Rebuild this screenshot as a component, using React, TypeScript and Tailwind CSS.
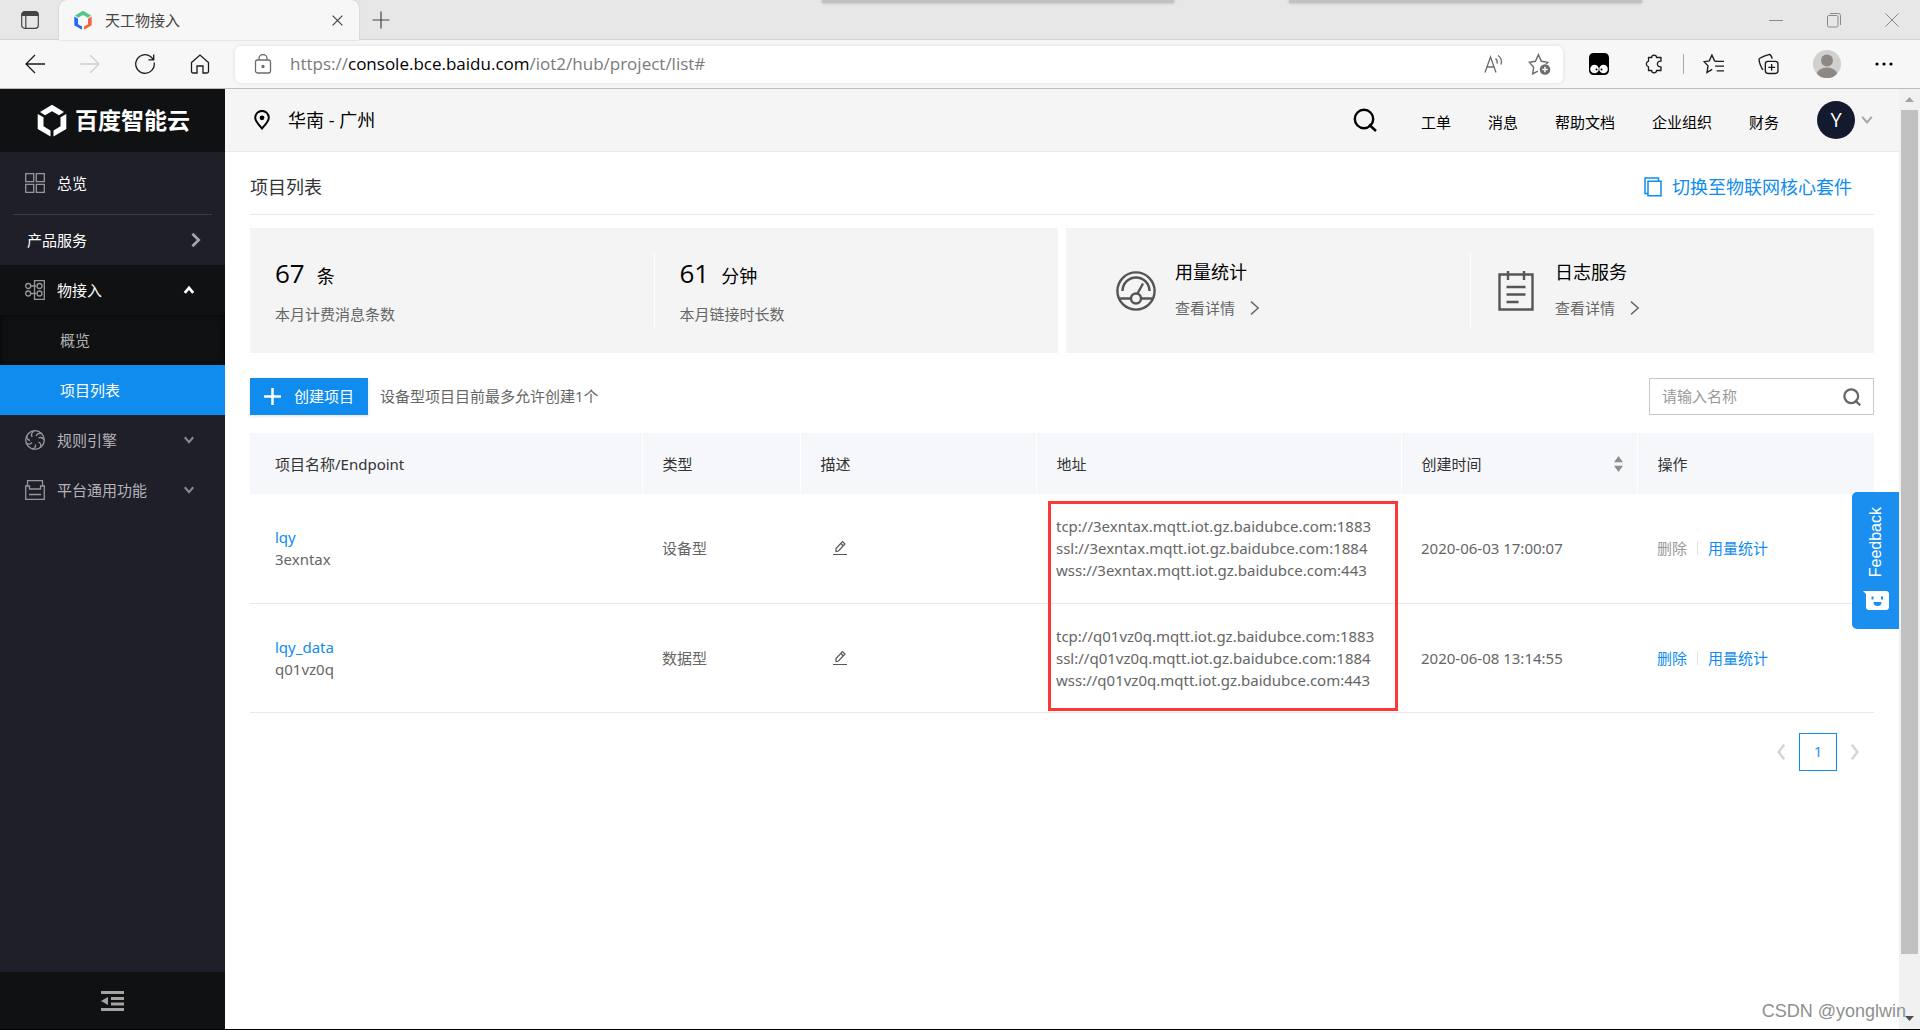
import type { ReactNode } from "react";

interface IconProps {
  className?: string;
  children?: ReactNode;
}

interface Project {
  name: string;
  endpoint: string;
  type: string;
  addresses: string[];
  createdAt: string;
  removable: boolean;
}

const projects: Project[] = [
  {
    name: "lqy",
    endpoint: "3exntax",
    type: "设备型",
    addresses: [
      "tcp://3exntax.mqtt.iot.gz.baidubce.com:1883",
      "ssl://3exntax.mqtt.iot.gz.baidubce.com:1884",
      "wss://3exntax.mqtt.iot.gz.baidubce.com:443",
    ],
    createdAt: "2020-06-03 17:00:07",
    removable: false,
  },
  {
    name: "lqy_data",
    endpoint: "q01vz0q",
    type: "数据型",
    addresses: [
      "tcp://q01vz0q.mqtt.iot.gz.baidubce.com:1883",
      "ssl://q01vz0q.mqtt.iot.gz.baidubce.com:1884",
      "wss://q01vz0q.mqtt.iot.gz.baidubce.com:443",
    ],
    createdAt: "2020-06-08 13:14:55",
    removable: true,
  },
];

const navLinks = ["工单", "消息", "帮助文档", "企业组织", "财务"];

/** 20x20 stroke icon used by the browser toolbar and the side menu. */
function Icon({ className = "size-5", children }: IconProps) {
  return (
    <svg viewBox="0 0 20 20" fill="none" stroke="currentColor" strokeWidth="1.3" className={`shrink-0 ${className}`} aria-hidden>
      {children}
    </svg>
  );
}

function Chevron({ className, d = "M6 3l7 7-7 7" }: { className: string; d?: string }) {
  return (
    <svg viewBox="0 0 20 20" fill="none" stroke="currentColor" className={`shrink-0 ${className}`} aria-hidden>
      <path d={d} />
    </svg>
  );
}

function SearchIcon({ className }: { className: string }) {
  return (
    <svg viewBox="0 0 24 24" fill="none" stroke="currentColor" className={`shrink-0 ${className}`} aria-hidden>
      <circle cx="11" cy="11" r="9.2" />
      <path d="M16 16.500l7 6.500" />
    </svg>
  );
}

function TabStrip() {
  return (
    <div className="relative flex h-10 items-stretch bg-[#e7e7e7] text-[#444]">
      <div className="absolute inset-x-0 bottom-0 h-px bg-[#d2d2d2]" />
      <div className="absolute left-[822px] top-0 h-[3px] w-[352px] bg-[#c2c2c2] shadow-[0_0_3px_#aaa]" />
      <div className="absolute left-[1289px] top-0 h-[3px] w-[353px] bg-[#c2c2c2] shadow-[0_0_3px_#aaa]" />
      <button className="flex w-[59px] items-center justify-center" aria-label="Tab actions">
        <svg viewBox="0 0 18 18" className="size-[18px]" fill="none" stroke="#444" strokeWidth="1.2">
          <rect x=".7" y=".7" width="16.6" height="16.6" rx="3" />
          <path d="M1 4.5V3.5A2.5 2.5 0 0 1 3.5 1h11A2.5 2.5 0 0 1 17 3.500v1z" fill="#444" />
          <path d="M4.800 5v12" />
        </svg>
      </button>
      <div className="relative flex w-[300px] items-center rounded-t-lg bg-[#f7f7f7] pl-3.5 pr-3 shadow-[0_0_2px_#bbb]">
        <svg viewBox="0 0 20 20" className="size-5 shrink-0" aria-hidden>
          <path d="M2 5.500 10 .8l8 4.700-3 2.300-5-2.800-5 2.800z" fill="#52c587" />
          <path d="M1.300 6.500 5 8.700v5.500l4 2.300v3.200l-7.700-4.500z" fill="#2468f2" />
          <path d="M18.700 6.500 15 8.700v5.500l-4 2.300v3.200l7.700-4.500z" fill="#f4633f" />
        </svg>
        <span className="ml-3 flex-1 text-[15px]">天工物接入</span>
        <button className="flex size-5 items-center justify-center" aria-label="Close tab">
          <svg viewBox="0 0 12 12" className="size-[11px]" stroke="#444" strokeWidth="1.300">
            <path d="M.7.7l10.600 10.600M11.300.7.7 11.300" />
          </svg>
        </button>
      </div>
      <button className="flex w-11 items-center justify-center" aria-label="New tab">
        <svg viewBox="0 0 18 18" className="size-[18px]" stroke="#444" strokeWidth="1.200">
          <path d="M9 .5v17M.5 9h17" />
        </svg>
      </button>
      <div className="ml-auto flex items-center gap-11 pr-[21px] text-[#8a8a8a]">
        <button aria-label="Minimize" className="flex h-4 items-center">
          <svg viewBox="0 0 14 14" className="size-3.5" stroke="currentColor">
            <path d="M0 7.500h14" />
          </svg>
        </button>
        <button aria-label="Restore">
          <svg viewBox="0 0 14 16" className="h-4 w-3.5" fill="none" stroke="currentColor">
            <rect x=".5" y="3.500" width="10.500" height="11.500" rx="1.500" />
            <path d="M3 1.500h8.500a2 2 0 0 1 2 2v9.500" />
          </svg>
        </button>
        <button aria-label="Close">
          <svg viewBox="0 0 14 16" className="h-4 w-3.5" stroke="currentColor">
            <path d="M.5 1.500l13 13M13.500 1.500l-13 13" />
          </svg>
        </button>
      </div>
    </div>
  );
}

function Toolbar() {
  return (
    <div className="flex h-[49px] items-center border-b border-[#bdbdbd] bg-[#f7f7f7] pr-[27px] text-[#1b1b1b]">
      <div className="flex items-center gap-[35px] px-[25px]">
        <button aria-label="Back">
          <Icon>
            <path d="M20 10H1M10 1l-9 9 9 9" />
          </Icon>
        </button>
        <button aria-label="Forward" className="text-[#cfcfcf]">
          <Icon>
            <path d="M0 10h19M10 1l9 9-9 9" />
          </Icon>
        </button>
        <button aria-label="Refresh">
          <Icon>
            <path d="M19.200 8.500A9.300 9.300 0 1 1 15.500 2.500l3 3M18.700.5v5.300h-5.300" />
          </Icon>
        </button>
        <button aria-label="Home">
          <Icon>
            <path d="M1.500 8.500 10 1l8.500 7.500v9a1.500 1.500 0 0 1-1.500 1.500h-4v-7H7v7H3a1.500 1.500 0 0 1-1.500-1.500z" />
          </Icon>
        </button>
      </div>
      <div className="flex h-[37px] flex-1 items-center rounded-md bg-white pl-[18px] pr-3 text-[#6b6b6b] shadow-[0_0_4px_#ddd]">
        <Icon>
          <rect x="2.500" y="6" width="15" height="13" rx="2" />
          <path d="M6 6V4.500a4 4 0 0 1 8 0V6" />
          <circle cx="10" cy="12.500" r="1" fill="currentColor" />
        </Icon>
        <input
          aria-label="Address"
          className="sr-only"
          defaultValue="https://console.bce.baidu.com/iot2/hub/project/list#"
        />
        <p className="ml-[17px] flex-1 text-[17px] text-[#7a7a7a]" aria-hidden>
          https://<span className="text-black">console.bce.baidu.com</span>/iot2/hub/project/list#
        </p>
        <button aria-label="Read aloud" className="mr-6">
          <Icon>
            <path d="M1 18.500 6.500 3 12 18.500M3 13h7M11.500 4.500c1.500 1 2 3 1.500 5M14 1.500c3 2 4 5.500 3 9" />
          </Icon>
        </button>
        <button aria-label="Add favorite">
          <Icon className="h-[22px] w-[23px]">
            <path d="M8.500 16.500l-4.700 2.500.9-6L.8 8.500l5.500-1L9 1.500l2.700 6 5.800 1-1.500 1.500" />
            <circle cx="15" cy="15" r="4.800" fill="currentColor" stroke="none" />
            <path d="M15 12.500v5M12.500 15h5" stroke="#fff" />
          </Icon>
        </button>
      </div>
      <div className="flex items-center pl-[26px]">
        <svg viewBox="0 0 20 22" className="h-[22px] w-5" aria-hidden>
          <path d="M4.500 0h11A4.500 4.500 0 0 1 20 4.500v13a4.500 4.500 0 0 1-4.500 4.500h-11A4.500 4.500 0 0 1 0 17.500v-13A4.500 4.500 0 0 1 4.500 0z" />
          <circle cx="5.500" cy="16" r="4.300" fill="#fff" />
          <circle cx="14.500" cy="16" r="4.300" fill="#fff" />
          <circle cx="7.500" cy="16.500" r="1" />
          <circle cx="12.500" cy="16.500" r="1" />
        </svg>
        <Icon className="ml-[35px] h-[22px] w-5">
          <path d="M4.500 3.500h3.200a2.400 2.400 0 0 1 4.800 0h4.500v3.700a2.900 2.900 0 1 0 0 5.600v3.700h-4.500a2.400 2.400 0 0 1-4.800 0H4.500v-3.700a2.900 2.900 0 0 1 0-5.600z" strokeLinejoin="round" />
        </Icon>
        <span className="ml-[19px] h-5 w-px bg-[#aaa]" />
        <Icon className="ml-[19px] h-[22px] w-[21px]">
          <path d="M14 7.500l-3-.5-2.500-5.500L6 7l-5 .8 3.800 4-1 6.200 5-2.800M12 7.500h8M11.500 12h8.500M13 16.500h7" />
        </Icon>
        <Icon className="ml-[34px] h-[22px] w-[21px]">
          <rect x="7" y="7.500" width="12" height="11.500" rx="2.500" />
          <path d="M13 10v6.500M9.800 13.200h6.500M5 15.500C3 14 1 8 1 5.500 1 4 8 1.500 10.500 1 12.500.8 13 3 13.500 5" />
        </Icon>
        <svg viewBox="0 0 28 28" className="ml-[34px] size-7" aria-hidden>
          <circle cx="14" cy="14" r="14" fill="#d2d0ce" />
          <circle cx="14" cy="10.500" r="6" fill="#8d8884" />
          <path d="M4 24a10 6.500 0 0 1 20 0 14 14 0 0 1-20 0z" fill="#8d8884" />
        </svg>
        <svg viewBox="0 0 18 4" className="ml-[34px] h-1 w-[18px]" aria-hidden>
          <circle cx="2" cy="2" r="1.600" />
          <circle cx="9" cy="2" r="1.600" />
          <circle cx="16" cy="2" r="1.600" />
        </svg>
      </div>
    </div>
  );
}

function Sidebar() {
  return (
    <aside className="flex w-[225px] shrink-0 flex-col bg-[#1f1f29] text-[15px] text-[#b4b4b8]">
      <a href="#" className="flex h-[63px] items-center bg-[#101112] pl-[37px] text-white">
        <svg viewBox="0 0 30 33" className="h-[33px] w-[30px]" fill="currentColor" aria-hidden>
          <path d="M3 8 15 .8 27 8l-5 3.200-7-4-7 4z" />
          <path d="M.7 10 6.500 13.300v9l7 4.200v6L.7 25z" />
          <path d="M29.300 10 23.500 13.300v9l-7 4.200v6L29.300 25z" />
        </svg>
        <span className="ml-2 text-[23px] font-bold">百度智能云</span>
      </a>
      <nav className="flex flex-col">
        <a href="#" className="flex h-[62px] items-center gap-3 pl-[25px] text-white">
          <Icon className="size-5 text-[#97979b]">
            <path d="M.7.7h8v8h-8zM11.300.7h8v8h-8zM.7 11.300h8v8h-8zM11.300 11.300h8v8h-8z" />
          </Icon>
          总览
        </a>
        <div className="mx-[13px] h-px bg-[#3b3b4b]" />
        <a href="#" className="flex h-[50px] items-center justify-between pl-[27px] pr-5 text-white">
          产品服务
          <Chevron className="size-[18px] stroke-[3] text-[#a5a5a9]" />
        </a>
        <button className="flex h-[50px] items-center gap-3 bg-[#101112] pl-[25px] pr-[29px] text-white">
          <Icon className="size-5 text-[#97979b]">
            <path d="M9.500.7h9.800v18.600H9.500zM6 6h5M6 13.500h5" />
            <circle cx="3.200" cy="6" r="2.500" />
            <circle cx="3.200" cy="13.500" r="2.500" />
            <circle cx="14.500" cy="6" r="2.500" />
            <circle cx="14.500" cy="13.500" r="2.500" />
          </Icon>
          物接入
          <Chevron className="ml-auto size-3.5 stroke-[4]" d="M4 14l6-7 6 7" />
        </button>
        <a href="#" className="flex h-[50px] items-center bg-[#101112] pl-[60px] shadow-[inset_0_0_6px_#08090a]">
          概览
        </a>
        <a href="#" className="flex h-[50px] items-center bg-[#108cee] pl-[60px] text-white">
          项目列表
        </a>
        <button className="flex h-[50px] items-center gap-3 pl-[25px] pr-[29px]">
          <Icon className="size-5 text-[#97979b]">
            <circle cx="10" cy="10" r="9.300" />
            <path d="M9 1C6.500 2.500 6 4.500 7 7M16.500 3.500c-2.500-.5-4.500.3-5.500 2.500M19 9.500c-1.500-2-3.500-2.500-5.500-1.500M15.500 17.500c.8-2.500 0-4.500-2-5.500M7 19c2.500-.5 4-2 3.500-4.500M1.500 13c2 1.500 4 1.300 5.500-.5M2 6c-.3 2.500 1 4 3 4.500" />
          </Icon>
          规则引擎
          <Chevron className="ml-auto size-3.5 stroke-[3] text-[#88888c]" d="M4 6l6 7 6-7" />
        </button>
        <button className="flex h-[50px] items-center gap-3 pl-[25px] pr-[29px]">
          <Icon className="size-5 text-[#97979b]">
            <path d="M2.500 6V.7h15V6M.7 6h3.800v3h11V6h3.800v13.300H.7zM4 14.500h12" />
          </Icon>
          平台通用功能
          <Chevron className="ml-auto size-3.5 stroke-[3] text-[#88888c]" d="M4 6l6 7 6-7" />
        </button>
      </nav>
      <button className="mt-auto flex h-[57px] items-center justify-center bg-[#101112] text-[#a3a3a3]" aria-label="Collapse menu">
        <svg viewBox="0 0 23 20" className="h-5 w-[23px]" fill="currentColor">
          <path d="M0 0h23v3H0zM10 6h13v3H10zM10 11.500h13v3H10zM0 17h23v3H0zM7 6v8L0 10z" />
        </svg>
      </button>
    </aside>
  );
}

function PageHeader() {
  return (
    <header className="flex h-[63px] items-center border-b border-[#e8e8e8] bg-[#f5f5f5] pl-[29px] pr-6 text-black">
      <svg viewBox="0 0 16 20" className="h-5 w-4" fill="none" stroke="currentColor" strokeWidth="2" aria-hidden>
        <path d="M8 18.500C4 14 1.200 11 1.200 7.700a6.800 6.800 0 0 1 13.600 0C14.800 11 12 14 8 18.500z" />
        <circle cx="8" cy="7.800" r="2.400" fill="currentColor" stroke="none" />
      </svg>
      <span className="ml-[18px] text-[18px]">华南 - 广州</span>
      <button aria-label="Search" className="ml-auto">
        <SearchIcon className="size-6 stroke-[2.4]" />
      </button>
      <nav className="ml-11 flex gap-[37px] pt-1 text-[15px]">
        {navLinks.map((label) => (
          <a key={label} href="#">
            {label}
          </a>
        ))}
      </nav>
      <button className="ml-[38px] flex items-center gap-1">
        <span className="flex size-[38px] items-center justify-center rounded-full bg-[#131a2d] text-[20px] text-white">Y</span>
        <Chevron className="size-4 stroke-[2.5] text-[#a5a5a5]" d="M4 6l6 7 6-7" />
      </button>
    </header>
  );
}

function Stat({ value, unit, label }: { value: string; unit: string; label: string }) {
  return (
    <div className="flex-1 pl-[25px]">
      <p className="flex items-baseline gap-3 text-[18px] leading-9 text-black">
        <span className="text-[26px]">{value}</span>
        {unit}
      </p>
      <p className="mt-2 text-[15px] leading-6 text-[#666]">{label}</p>
    </div>
  );
}

function Service({ title, className, children }: { title: string; className: string; children: ReactNode }) {
  return (
    <div className={`flex items-center gap-[19px] ${className}`}>
      <svg viewBox="0 0 40 40" className="size-10" fill="none" stroke="#555" strokeWidth="2.400" aria-hidden>
        {children}
      </svg>
      <div className="pb-0.5">
        <p className="text-[18px] leading-7 text-black">{title}</p>
        <a href="#" className="mt-2 flex items-center gap-3 text-[15px] leading-7 text-[#666]">
          查看详情
          <Chevron className="size-4 stroke-[1.8]" d="M5 2l9 8-9 8" />
        </a>
      </div>
    </div>
  );
}

function Summary() {
  return (
    <div className="mt-[13px] grid grid-cols-2 gap-2">
      <section className="flex h-[125px] items-center bg-[#f4f4f4]">
        <Stat value="67" unit="条" label="本月计费消息条数" />
        <div className="h-[75px] w-px bg-white" />
        <Stat value="61" unit="分钟" label="本月链接时长数" />
      </section>
      <section className="grid h-[125px] grid-cols-2 items-center bg-[#f4f4f4]">
        <Service title="用量统计" className="pl-[50px]">
          <circle cx="20" cy="20" r="18.600" />
          <path d="M6.500 20a13.500 13.500 0 0 1 27 0M3 27.500h12M25 27.500h12M21.500 22.500 27 12.500" />
          <circle cx="20" cy="27.500" r="5" />
        </Service>
        <Service title="日志服务" className="h-[75px] border-l border-white pl-[25px]">
          <path d="M3.500 3.500h33v35h-33zM12 0v9M28 0v9M10.500 16h19M10.500 23.500h19M10.500 31h12" />
        </Service>
      </section>
    </div>
  );
}

function ActionBar() {
  return (
    <div className="mt-[25px] flex h-[37px] items-center">
      <button className="flex h-full items-center gap-[13px] bg-[#108cee] px-3.5 text-[15px] text-white shadow-[0_1px_3px_#ddd]">
        <svg viewBox="0 0 17 17" className="size-[17px]" stroke="currentColor" strokeWidth="2.500" aria-hidden>
          <path d="M8.500 0v17M0 8.500h17" />
        </svg>
        创建项目
      </button>
      <span className="ml-3 text-[15px] text-[#666]">设备型项目目前最多允许创建1个</span>
      <label className="ml-auto flex h-full w-[225px] items-center border border-[#c8c8c8] px-3">
        <input
          type="text"
          aria-label="名称"
          placeholder="请输入名称"
          className="min-w-0 flex-1 text-[15px] outline-none placeholder:text-[#999]"
        />
        <SearchIcon className="size-[18px] stroke-[3] text-[#666]" />
      </label>
    </div>
  );
}

function ProjectTable() {
  return (
    <table className="mt-[18px] w-full table-fixed text-left font-['Noto_Sans','Noto_Sans_CJK_SC',sans-serif] text-[15px] leading-[22px] text-[#666]">
      <colgroup>
        <col className="w-[392px]" />
        <col className="w-[158px]" />
        <col className="w-[236px]" />
        <col className="w-[365px]" />
        <col className="w-[236px]" />
        <col className="w-[237px]" />
      </colgroup>
      <thead>
        <tr className="h-[61px] bg-[#f6f7fb] text-[#333] *:border-l *:border-white *:px-5 *:font-normal">
          <th className="first:border-l-0 first:pl-[25px]">项目名称/Endpoint</th>
          <th>类型</th>
          <th>描述</th>
          <th>地址</th>
          <th>
            <button className="flex w-full items-center justify-between">
              创建时间
              <svg viewBox="0 0 10 18" className="-mr-1.5 h-4 w-[9px]" fill="#8e8e8e" aria-hidden>
                <path d="M0 7 5 0l5 7zM0 11l5 7 5-7z" />
              </svg>
            </button>
          </th>
          <th>操作</th>
        </tr>
      </thead>
      <tbody>
        {projects.map((project, idx) => (
          <tr key={project.name} className="h-[109px] border-b border-[#e8e9eb] *:px-5">
            <td className="first:pl-[25px]">
              <a href="#" className="block text-[#108cee]">
                {project.name}
              </a>
              {project.endpoint}
            </td>
            <td>{project.type}</td>
            <td>
              <button aria-label="编辑描述" className="ml-3 block">
                <svg viewBox="0 0 16 16" className="size-4" fill="none" stroke="#555" strokeWidth="1.200">
                  <path d="M1 14.500h14M4 11.500V8.500l6.500-7 2.500 2.500-6.500 7zM9 3.500 11.300 6" />
                </svg>
              </button>
            </td>
            <td className="relative whitespace-nowrap">
              {/* highlight frame round the addresses of both rows */}
              {idx === 0 && (
                <div className="pointer-events-none absolute left-3 right-[3px] top-[7px] h-[210px] border-3 border-[#fb3838]" />
              )}
              {project.addresses.map((address) => (
                <p key={address}>{address}</p>
              ))}
            </td>
            <td>{project.createdAt}</td>
            <td>
              <div className="flex items-center gap-2.5">
                <button disabled={!project.removable} className="text-[#108cee] disabled:text-[#999]">
                  删除
                </button>
                <span className="h-3.5 w-px bg-[#e3e3e3]" />
                <a href="#" className="text-[#108cee]">
                  用量统计
                </a>
              </div>
            </td>
          </tr>
        ))}
      </tbody>
    </table>
  );
}

function Pagination() {
  return (
    <div className="mt-5 flex items-center justify-end gap-2.5 pr-[11px] text-[#d4d4d4]">
      <button aria-label="Previous page">
        <Chevron className="size-4 stroke-[3]" d="M14 1 7 10l7 9" />
      </button>
      <button className="size-[38px] border border-[#108cee] text-[15px] text-[#108cee]">1</button>
      <button aria-label="Next page">
        <Chevron className="size-4 stroke-[3]" d="M6 1l7 9-7 9" />
      </button>
    </div>
  );
}

function Scrollbar() {
  return (
    <div className="flex w-[21px] shrink-0 flex-col items-center bg-[#f1f1f1]">
      <svg viewBox="0 0 9 5" className="my-2 h-[5px] w-[9px]" fill="#a3a3a3" aria-hidden>
        <path d="M0 5 4.500 0 9 5z" />
      </svg>
      <div className="h-[844px] w-[17px] bg-[#c1c1c1]" />
      <svg viewBox="0 0 9 5" className="mb-2 mt-auto h-[5px] w-[9px]" fill="#505050" aria-hidden>
        <path d="M0 0l4.500 5L9 0z" />
      </svg>
    </div>
  );
}

export default function App() {
  return (
    <div className="relative flex min-h-screen flex-col border-b border-black bg-white font-['Open_Sans','Noto_Sans_CJK_SC',sans-serif]">
      <TabStrip />
      <Toolbar />
      <div className="flex flex-1">
        <Sidebar />
        <div className="relative min-w-0 flex-1">
          <PageHeader />
          <main className="px-[25px]">
            <div className="flex h-[63px] items-center justify-between border-b border-[#e8e9eb] pr-[22px] pt-2">
              <h1 className="text-[18px] text-[#333]">项目列表</h1>
              <a href="#" className="flex items-center gap-2.5 text-[18px] text-[#108cee]">
                <svg viewBox="0 0 18 20" className="h-5 w-[18px]" fill="none" stroke="currentColor" strokeWidth="1.500" aria-hidden>
                  <path d="M4 4.300h13v14.500H4zM4 16.500H1V1h13.500v3" />
                </svg>
                切换至物联网核心套件
              </a>
            </div>
            <Summary />
            <ActionBar />
            <ProjectTable />
            <Pagination />
          </main>
          <button className="absolute right-0 top-[403px] flex h-[137px] w-[47px] flex-col items-center rounded-l-[5px] bg-[#1a8ff0] pt-[15px] font-['Liberation_Sans',sans-serif] text-[16px] text-white">
            <span className="rotate-180 [writing-mode:vertical-rl]">Feedback</span>
            <svg viewBox="0 0 26 19" className="mt-3.5 h-[19px] w-[26px]" aria-hidden>
              <path d="M0 0h23a3 3 0 0 1 3 3v13a3 3 0 0 1-3 3H6a3 3 0 0 1-3-3V3z" fill="#fff" />
              <path d="M9.500 5.500v3M19 5.500v3" stroke="#1a8ff0" strokeWidth="2" />
              <path d="M10.500 11h8a4 4 0 0 1-8 0z" fill="#1a8ff0" />
            </svg>
          </button>
        </div>
        <Scrollbar />
      </div>
      <p className="absolute bottom-1 right-[14px] font-['Liberation_Sans',sans-serif] text-[18px] text-[#8f8f8f]">CSDN @yonglwin</p>
    </div>
  );
}
